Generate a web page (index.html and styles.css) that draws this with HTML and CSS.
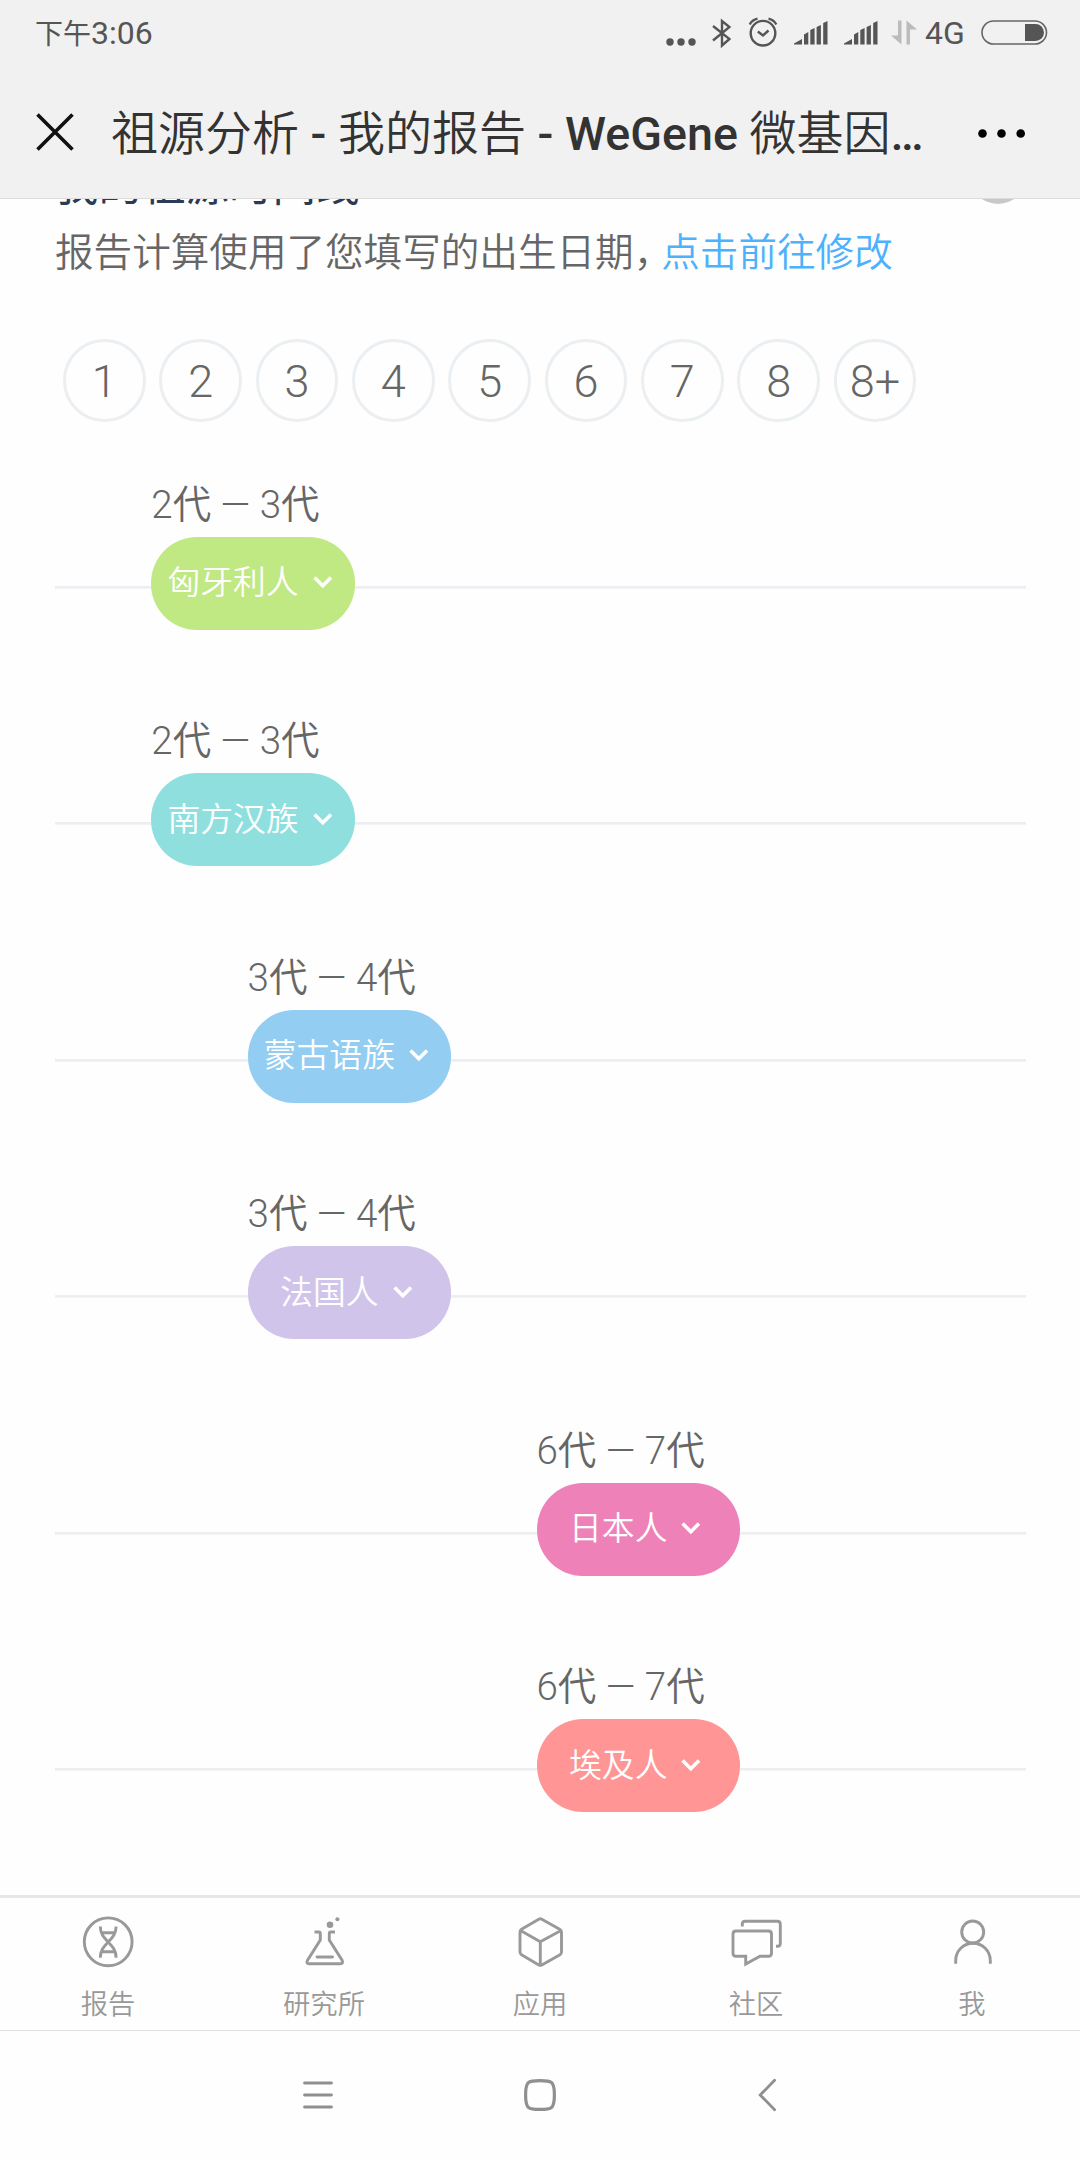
FILE: index.html
```html
<!DOCTYPE html>
<html lang="zh-CN">
<head>
    <meta charset="UTF-8">
    <meta name="viewport" content="width=device-width, initial-scale=1.0">
    <title>祖源分析 - 我的报告 - WeGene 微基因</title>

    <link rel="stylesheet" href="styles.css">
</head>
<body>

    <div class="statusbar">
        <div class="time"><span class="cjk">下午</span>3:06</div>
        <div class="status-icons">
            <svg class="st-dots" width="26" height="36" viewBox="0 0 26 36"><circle cx="4" cy="27" r="3.7"/><circle cx="15" cy="27" r="3.7"/><circle cx="26" cy="27" r="3.7"/></svg>
            <svg class="st-bt" width="20" height="36" viewBox="0 0 20 36"><path d="M2 11 18.500 24 11 30.500V6L18.500 12 2 25.500"/></svg>
            <svg class="st-alarm" width="30" height="36" viewBox="0 0 30 36"><circle cx="15" cy="18.200" r="12.300"/><path d="M9.800 16.500 15 20.500 20.500 15.500M1.700 9.500Q4 5 9.500 3.700M28.300 9.500Q26 5 20.500 3.700"/></svg>
            <svg class="st-signal" width="34" height="36" viewBox="0 0 34 36"><path d="M0 29.500V28.500L8 24V29.500ZM10 29.500V19.500L14.300 17V29.500ZM16.300 29.500V15L20.600 13V29.500ZM22.600 29.500V12L26.900 10V29.500ZM29.200 29.500V8L33.500 6V29.500Z"/></svg>
            <svg class="st-signal" width="34" height="36" viewBox="0 0 34 36"><path d="M0 29.500V28.500L8 24V29.500ZM10 29.500V19.500L14.300 17V29.500ZM16.300 29.500V15L20.600 13V29.500ZM22.600 29.500V12L26.900 10V29.500ZM29.200 29.500V8L33.500 6V29.500Z"/></svg>
            <svg class="st-data" width="26" height="36" viewBox="0 0 26 36"><path d="M7 5.500H10.500V29.500L0 20.500H7ZM15.500 29.500V5.500L26 14.500H19V29.500Z"/></svg>
            <span class="network">4G</span>
            <svg class="st-battery" width="67" height="36" viewBox="0 0 67 36"><rect x="1" y="6" width="64.500" height="23" rx="11.500"/><path d="M44 9H54.500A8.500 8.500 0 0 1 54.500 26H44Z"/></svg>
        </div>
    </div>

    <div class="titlebar">
        <svg class="close" width="40" height="40" viewBox="0 0 40 40"><path d="M2.500 1.500 37.500 36.500M37.500 1.500 2.500 36.500"/></svg>
        <div class="page-title"><span class="cjk">祖源分析</span> - <span class="cjk">我的报告</span> - WeGene <span class="cjk">微基因</span>…</div>
        <svg class="more" width="50" height="12" viewBox="0 0 50 12"><circle cx="5.500" cy="6.500" r="4.300"/><circle cx="24.500" cy="6.500" r="4.300"/><circle cx="43.700" cy="6.500" r="4.300"/></svg>
    </div>

    <div class="content">
        <div class="section-head">
            <div class="section-title">我的祖源时间线</div>
            <div class="help"></div>
        </div>
        <div class="hint">报告计算使用了您填写的出生日期<span class="comma">，</span><a class="link">点击前往修改</a></div>

        <div class="generations">
            <div class="gen">1</div>
            <div class="gen">2</div>
            <div class="gen">3</div>
            <div class="gen">4</div>
            <div class="gen">5</div>
            <div class="gen">6</div>
            <div class="gen">7</div>
            <div class="gen">8</div>
            <div class="gen">8+</div>
        </div>

        <div class="timeline">
            <div class="row" style="--gen: 1">
                <div class="range">2<span class="cjk">代</span> — 3<span class="cjk">代</span></div>
                <div class="track"><div class="pill green">匈牙利人<svg class="arrow" width="40" height="20" viewBox="0 0 40 20"><path d="M15.600 4.500 23.800 12.700 32 4.500"/></svg></div></div>
            </div>
            <div class="row" style="--gen: 1">
                <div class="range">2<span class="cjk">代</span> — 3<span class="cjk">代</span></div>
                <div class="track"><div class="pill teal">南方汉族<svg class="arrow" width="40" height="20" viewBox="0 0 40 20"><path d="M15.600 4.500 23.800 12.700 32 4.500"/></svg></div></div>
            </div>
            <div class="row" style="--gen: 2">
                <div class="range">3<span class="cjk">代</span> — 4<span class="cjk">代</span></div>
                <div class="track"><div class="pill blue">蒙古语族<svg class="arrow" width="40" height="20" viewBox="0 0 40 20"><path d="M15.600 4.500 23.800 12.700 32 4.500"/></svg></div></div>
            </div>
            <div class="row" style="--gen: 2">
                <div class="range">3<span class="cjk">代</span> — 4<span class="cjk">代</span></div>
                <div class="track"><div class="pill purple">法国人<svg class="arrow" width="40" height="20" viewBox="0 0 40 20"><path d="M15.600 4.500 23.800 12.700 32 4.500"/></svg></div></div>
            </div>
            <div class="row" style="--gen: 5">
                <div class="range">6<span class="cjk">代</span> — 7<span class="cjk">代</span></div>
                <div class="track"><div class="pill pink">日本人<svg class="arrow" width="40" height="20" viewBox="0 0 40 20"><path d="M15.600 4.500 23.800 12.700 32 4.500"/></svg></div></div>
            </div>
            <div class="row" style="--gen: 5">
                <div class="range">6<span class="cjk">代</span> — 7<span class="cjk">代</span></div>
                <div class="track"><div class="pill red">埃及人<svg class="arrow" width="40" height="20" viewBox="0 0 40 20"><path d="M15.600 4.500 23.800 12.700 32 4.500"/></svg></div></div>
            </div>
        </div>
    </div>

    <div class="tabbar">
        <div class="tab">
            <svg width="60" height="60" viewBox="0 0 60 60">
                <circle cx="30.200" cy="29.800" r="23.900"/>
                <path d="M22.300 14.500C22.300 22 26 25.500 30.200 30S38.100 38 38.100 45.800M38.100 14.500C38.100 22 34.400 25.500 30.200 30S22.300 38 22.300 45.800M24 20.700H36.500M24 39.700H36.500"/>
            </svg>
            <div>报告</div>
        </div>
        <div class="tab">
            <svg width="60" height="60" viewBox="0 0 60 60">
                <path d="M20.500 20H24.800Q26.300 20 26.300 21.500V28L13.400 48.500Q12 51.700 15 51.700H46.500Q49.500 51.700 48.200 48.500L35.300 28V21.500Q35.300 20 36.800 20H41"/>
                <path stroke-linecap="round" d="M23 45H38.500"/>
                <circle class="solid" cx="36" cy="12.700" r="3.300"/>
                <circle class="solid" cx="43.400" cy="7.300" r="2"/>
            </svg>
            <div>研究所</div>
        </div>
        <div class="tab">
            <svg width="60" height="60" viewBox="0 0 60 60">
                <path stroke-linejoin="round" d="M28.800 7.200Q30.300 6.300 31.800 7.200L49.700 17.300Q51.500 18.300 51.500 20.300V40Q51.500 41.800 50 42.700L31.800 53Q30.300 53.800 28.800 53L11.500 42.700Q10 41.800 10 40V20.300Q10 18.300 11.500 17.300ZM10.500 18.500 30.300 29.700 51 18.500M30.300 29.700V53"/>
            </svg>
            <div>应用</div>
        </div>
        <div class="tab">
            <svg width="60" height="60" viewBox="0 0 60 60">
                <path d="M10 19H42.500Q45.500 19 45.500 22V41.300Q45.500 44.300 42.500 44.300H34L19.700 52V44.300H10Q7 44.300 7 41.300V22Q7 19 10 19ZM16.300 14.500V12Q16.300 9.200 19.300 9.200H51.300Q54.300 9.200 54.300 12.200V31.500Q54.300 34.300 51.500 34.300H50"/>
            </svg>
            <div>社区</div>
        </div>
        <div class="tab">
            <svg width="60" height="60" viewBox="0 0 60 60">
                <circle cx="30.700" cy="20" r="11"/>
                <path d="M13.700 51.700V48.500A17.300 17.300 0 0 1 48.300 48.500V51.700"/>
            </svg>
            <div>我</div>
        </div>
    </div>

    <div class="sysnav">
        <svg width="40" height="40" viewBox="0 0 40 40"><path d="M6.500 8H33.500M6.500 20H33.500M6.500 32H33.500"/></svg>
        <svg width="40" height="40" viewBox="0 0 40 40"><path class="thick" d="M20 5.600C31.500 5.600 34.400 6 34.400 20S31.500 34.400 20 34.400 5.600 34 5.600 20 8.500 5.600 20 5.600Z"/></svg>
        <svg width="40" height="40" viewBox="0 0 40 40"><path d="M32.600 5.300 18.200 20 32.600 34.700"/></svg>
    </div>

</body>
</html>
```

FILE: styles.css
```css
* {
    box-sizing: border-box;
}

body {
    margin: 0;
    width: 1080px;
    height: 2160px;
    overflow: hidden;
    display: flex;
    flex-direction: column;
    background-color: #fefefe;
    font-family: Roboto, "Noto Sans CJK SC", sans-serif;
    font-weight: 350;
    color: #666;
}

svg {
    display: block;
    flex: none;
    fill: none;
}

/* Phone status bar */
.statusbar {
    height: 68px;
    flex: none;
    display: flex;
    justify-content: space-between;
    padding: 15px 32px 0 35px;
    background-color: #f1f1f1;
    color: #555;
    font-size: 32px;
    font-weight: 400;
    line-height: 36px;
}

.time .cjk {
    font-size: 28px;
    font-weight: 400;
}

.status-icons {
    display: flex;
    height: 36px;
}

.st-dots {
    fill: #555;
    margin-right: 19px;
    overflow: visible;
}

.st-bt {
    stroke: #555;
    stroke-width: 2.4px;
    margin-right: 17px;
}

.st-alarm {
    stroke: #555;
    stroke-width: 2.4px;
    margin-right: 16px;
}

.st-signal {
    fill: #555;
    margin-right: 16px;
}

.st-data {
    fill: #bbb;
    margin: 0 8px 0 -3px;
}

.network {
    width: 41px;
    margin-right: 15px;
}

.st-battery rect {
    stroke: #666;
    stroke-width: 1.6px;
}

.st-battery path {
    fill: #555;
}

/* Browser title bar */
.titlebar {
    height: 131px;
    flex: none;
    display: flex;
    align-items: center;
    padding: 0 53px 0 35px;
    background-color: #f1f1f1;
    border-bottom: 1px solid #dcdcdc;
}

.close {
    stroke: #111;
    stroke-width: 3.6px;
}

.page-title {
    flex: 1;
    padding: 2px 0 0 36px;
    font-size: 46.600px;
    font-weight: 500;
    line-height: 70px;
    white-space: nowrap;
    color: #333;
}

.page-title .cjk {
    font-size: 47px;
    font-weight: 350;
}

.more {
    fill: #000;
}

/* Report */
.content {
    flex: 1;
    min-height: 0;
    overflow: hidden;
    padding: 0 54.500px 0 55px;
}

.section-head {
    height: 64px;
    margin-top: -44px;
    display: flex;
    justify-content: space-between;
}

.section-title {
    font-size: 43.500px;
    font-weight: 400;
    line-height: 64px;
    color: #2b3a55;
}

.help {
    width: 56px;
    height: 56px;
    margin-top: -7px;
    border-radius: 50%;
    background-color: #c8c8c8;
}

.hint {
    height: 58px;
    margin-top: 5px;
    font-size: 38.600px;
    line-height: 58px;
    white-space: nowrap;
}

.comma {
    letter-spacing: -11px;
}

.link {
    color: #4db1fb;
}

.generations {
    display: flex;
    gap: 13.650px;
    margin-top: 57px;
    padding-left: 8px;
}

.gen {
    width: 82.700px;
    height: 82.700px;
    flex: none;
    border: 3px solid #ebeff2;
    border-radius: 50%;
    font-size: 45px;
    font-weight: 300;
    line-height: 79px;
    text-align: center;
}

.row {
    height: 236.460px;
}

.timeline {
    margin-top: 56px;
}

.range {
    height: 59.300px;
    padding-left: calc(var(--gen) * 96.300px);
    font-size: 38.500px;
    font-weight: 300;
    line-height: 54px;
}

.range .cjk {
    font-weight: 350;
}

.track {
    padding-left: calc(var(--gen) * 96.300px);
    background: linear-gradient(#ebeff2, #ebeff2) 0 49px / 100% 2.700px no-repeat;
}

.pill {
    display: flex;
    align-items: center;
    justify-content: center;
    width: 203.500px;
    height: 93px;
    border-radius: 46px;
    font-size: 32.800px;
    line-height: 48px;
    color: #fff;
}

.arrow {
    stroke: #fff;
    stroke-width: 3.600px;
}

.green { background-color: #c0e883; }
.teal { background-color: #90dfdf; }
.blue { background-color: #93cdf2; }
.purple { background-color: #d1c4ea; }
.pink { background-color: #ee82b8; }
.red { background-color: #ff9595; }

/* App tabs */
.tabbar {
    height: 136px;
    flex: none;
    display: flex;
    border-top: 3px solid #e2e8e6;
    border-bottom: 1px solid #e0e0e0;
    background-color: #fefefe;
}

.tab {
    width: 216px;
    display: flex;
    flex-direction: column;
    align-items: center;
    padding-top: 14px;
    font-size: 27.300px;
    line-height: 40px;
    color: #999;
}

.tab svg {
    stroke: #999;
    stroke-width: 2.900px;
    margin-bottom: 13px;
}

.tab .solid {
    fill: #999;
    stroke: none;
}

/* Android buttons */
.sysnav {
    height: 129px;
    flex: none;
    display: flex;
    align-items: center;
    justify-content: center;
    gap: 182px;
    padding-bottom: 2px;
}

.sysnav svg {
    stroke: #8f8f8f;
    stroke-width: 2.800px;
    stroke-linecap: round;
}

.sysnav .thick {
    stroke-width: 3.200px;
}
```
